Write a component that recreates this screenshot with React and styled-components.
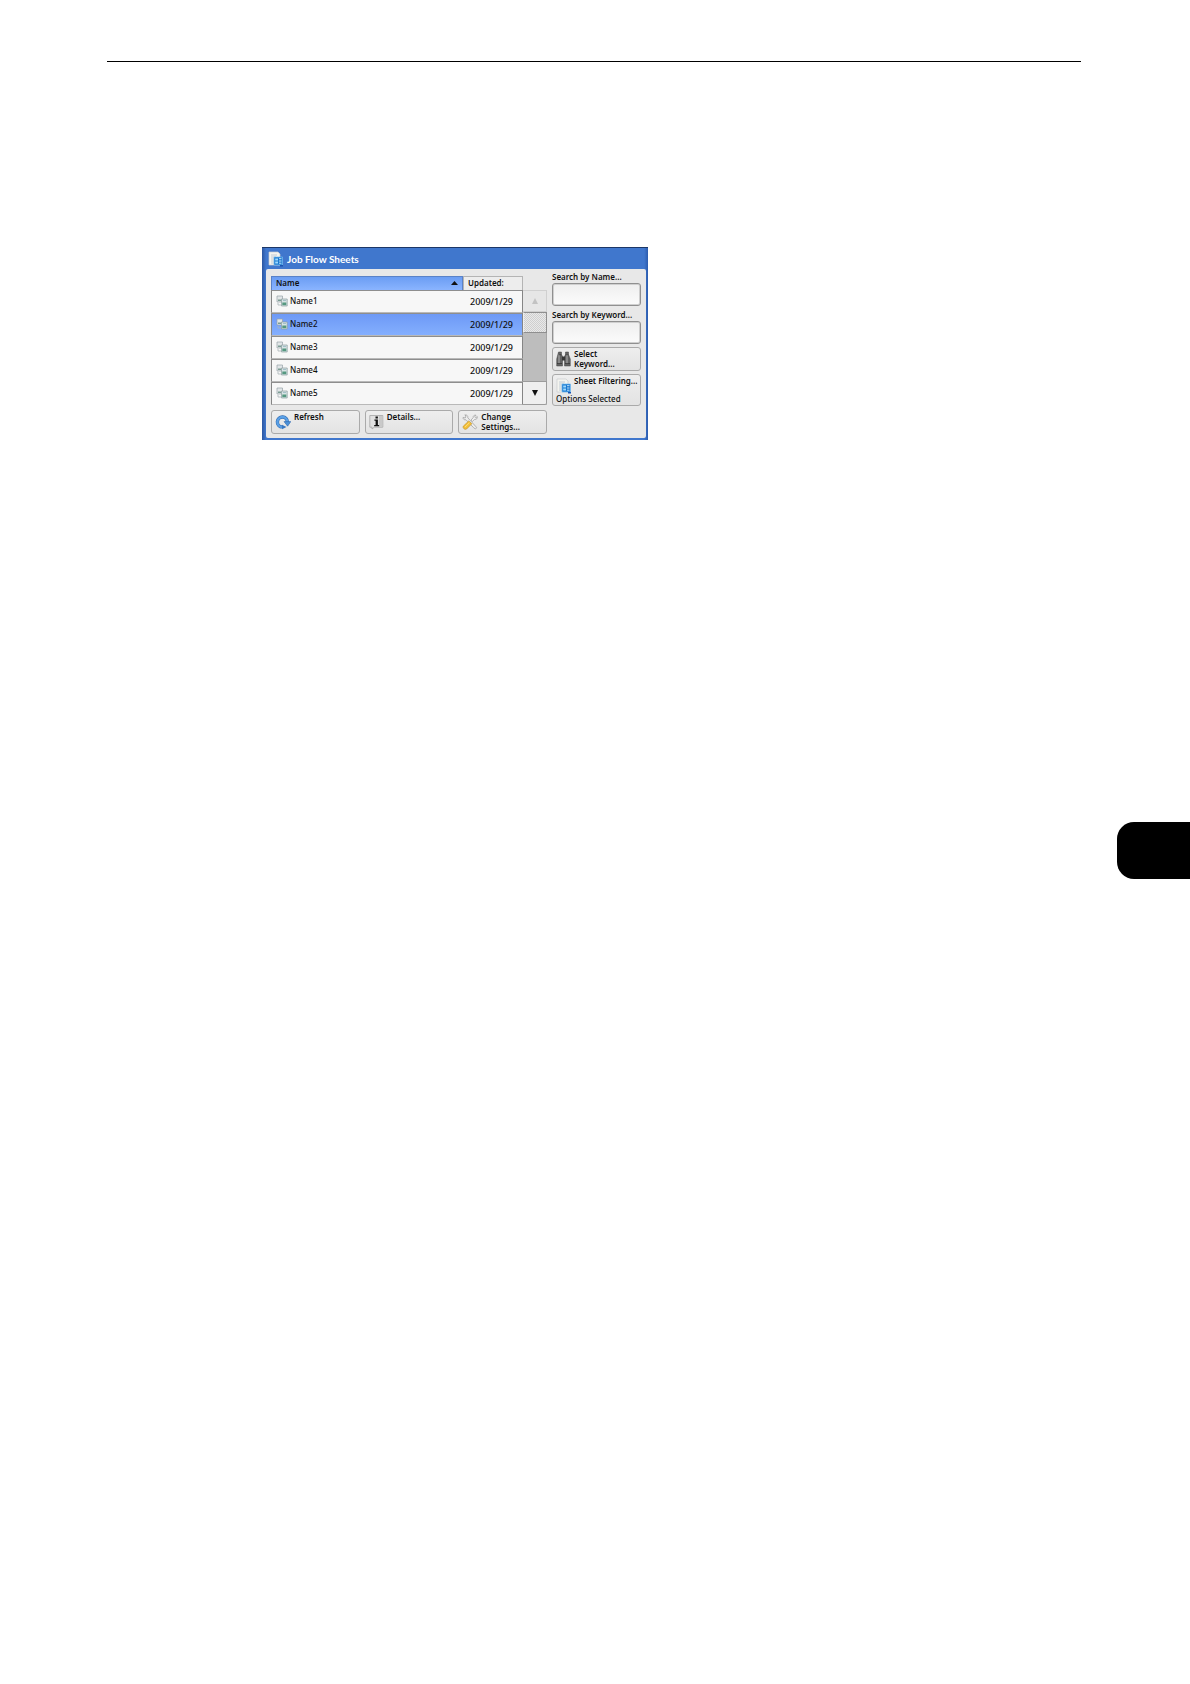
import React, { useState } from "react";
import styled, { createGlobalStyle } from "styled-components";

const GlobalStyle = createGlobalStyle`
  * {
    box-sizing: border-box;
  }

  body {
    margin: 0;
    background: #fff;
    color: #111;
    font-family: "Noto Sans", "Open Sans", sans-serif;
  }

  button, input {
    font-family: inherit;
    color: inherit;
  }

  svg {
    flex-shrink: 0;
  }
`;

const Page = styled.main`
  display: flex;
  flex-direction: column;
  min-height: 100vh;
  padding-top: 61px;
`;

const Rule = styled.hr`
  align-self: stretch;
  height: 1px;
  margin: 0 109px 0 107px;
  border: 0;
  background: #000;
`;

const SideTab = styled.aside`
  align-self: flex-end;
  width: 73px;
  height: 57px;
  margin-top: 382px;
  border-radius: 17px 0 0 17px;
  background: #000;
`;

const Screen = styled.section`
  width: 100%;
  max-width: 386px;
  margin: 185px 0 0 262px;
  padding: 0 2px 2px 4px;
  border-top: 1px solid #1c3767;
  background: linear-gradient(90deg, #2c56a0 0, #4077cd 4px, #4077cd 99%, #2c5cae 100%);
`;

const TitleBar = styled.header`
  display: flex;
  align-items: center;
  gap: 3px;
  height: 21px;
  padding-left: 2px;
`;

const Title = styled.h1`
  margin: 0;
  color: #fff;
  font-family: Lato, "Noto Sans", sans-serif;
  font-size: 10px;
  font-weight: 700;
  line-height: 20px;
`;

const Panel = styled.div`
  display: grid;
  grid-template-columns: minmax(0, 276fr) minmax(0, 89fr);
  gap: 5px;
  padding: 2px 5px 4px;
  border-radius: 2px;
  background: #e8e8e8;
`;

const ListColumn = styled.div`
  padding-top: 5px;
`;

const ListArea = styled.div`
  display: flex;
`;

const Table = styled.table`
  flex: 1;
  border-collapse: separate;
  border-spacing: 0;
  table-layout: fixed;
`;

const HeadCell = styled.th`
  width: ${({ $width }) => $width || "auto"};
  height: 14px;
  padding: 0 4px;
  border: 1px solid ${({ $sorted }) => ($sorted ? "#5a82c8" : "#b4b4b4")};
  border-bottom: 0;
  background: ${({ $sorted }) =>
    $sorted ? "linear-gradient(#6b9df3, #8ab4ff)" : "#ededed"};
  font-size: 8px;
  font-weight: 600;
  line-height: 11px;
  text-align: left;
  vertical-align: top;
`;

const SortButton = styled.button`
  display: flex;
  align-items: center;
  justify-content: space-between;
  width: 100%;
  padding: 0;
  border: 0;
  background: none;
  font-size: 8px;
  font-weight: 600;
  line-height: 11px;
`;

const Row = styled.tr`
  background: ${({ $selected }) =>
    $selected ? "linear-gradient(#6c98f5, #85b0ff)" : "#f7f7f7"};
  cursor: pointer;
`;

const Cell = styled.td`
  height: 23px;
  padding: ${({ $date }) => ($date ? "0 0 0 7px" : "0 0 2px 4px")};
  border-top: 1px solid #8e8e8e;
  border-bottom: 1px solid #b9b9b9;
  border-left: ${({ $date }) => ($date ? "0" : "1px solid #858585")};
  border-right: ${({ $date }) => ($date ? "1px solid #858585" : "0")};
  font-size: ${({ $date }) => ($date ? "9px" : "8px")};
  font-weight: 500;
  line-height: 12px;
`;

const SheetName = styled.div`
  display: flex;
  align-items: center;
  gap: 2px;
`;

const Scroller = styled.div`
  display: flex;
  flex-direction: column;
  width: 24px;
  margin-top: 14px;
  background: #bdbdbd;
`;

const ScrollButton = styled.button`
  display: flex;
  align-items: center;
  justify-content: center;
  height: ${({ $down }) => ($down ? "24px" : "22px")};
  padding: 0;
  border: 1px solid ${({ $down }) => ($down ? "#9c9c9c" : "#d0d0d0")};
  border-left: 0;
  border-radius: ${({ $down }) => ($down ? "0 0 2px 0" : "0")};
  background: ${({ $down }) => ($down ? "#efefef" : "#e6e6e6")};
`;

const Thumb = styled.div`
  height: 21px;
  border: 1px solid #8f8f8f;
  border-left-color: #eee;
  background: repeating-conic-gradient(#cfcfcf 0 25%, #e9e9e9 0 50%) 0 0 / 2px 2px;
`;

const Track = styled.div`
  flex: 1;
  border-right: 1px solid #a5a5a5;
`;

const Actions = styled.div`
  display: grid;
  grid-template-columns: repeat(3, minmax(0, 1fr));
  gap: 5px;
  margin-top: 5px;
`;

const ActionButton = styled.button`
  display: flex;
  align-items: flex-start;
  gap: 3px;
  height: 24px;
  padding: 1px 3px 2px;
  border: 1px solid #aaa;
  border-radius: 3px;
  background: linear-gradient(#eee, #e3e3e3);
  font-size: 8px;
  font-weight: 600;
  line-height: 10px;
  text-align: left;
  white-space: nowrap;

  svg {
    margin-top: 2px;
  }
`;

const SearchColumn = styled.div`
  display: flex;
  flex-direction: column;
`;

const FieldLabel = styled.label`
  height: 12px;
  font-size: 8px;
  font-weight: 600;
  line-height: 12px;
  white-space: nowrap;
`;

const SearchInput = styled.input`
  width: 100%;
  height: 23px;
  margin-bottom: 3px;
  padding: 2px 4px;
  border: 1px solid #909090;
  border-radius: 3px;
  background: linear-gradient(#efefef, #fbfbfb);
  box-shadow: inset 0 0 0 1px #cfcfcf;
  font-size: 8px;
`;

const KeywordButton = styled(ActionButton)`
  margin-bottom: 3px;
`;

const FilterButton = styled(ActionButton)`
  flex-direction: column;
  gap: 0;
  height: 32px;
`;

const FilterTop = styled.span`
  display: flex;
  align-items: flex-start;
  gap: 2px;
  height: 19px;
`;

const FilterNote = styled.span`
  font-weight: 500;
`;

const SheetIcon = ({ size = 16 }) => (
  <svg width={size} height={size} viewBox="0 0 16 16" aria-hidden="true">
    <path d="M1 1h9l2 2v11H1z" fill="#f4f4ef" stroke="#c8ccd0" strokeWidth=".7" />
    <path d="M3 4h6M3 6h5M3 8h3M3 10h3M3 12h3" stroke="#b5c2ce" strokeWidth=".8" />
    <path d="M6 6h8.5v8H6z" fill="#1a78cf" stroke="#79bef2" strokeWidth=".7" />
    <path d="M7.2 7.4h2.8v2.2H7.2zM7.2 10.6h2.8v2H7.2z" fill="#9bdaff" />
    <path d="M11 7.7h2.5M11 10h2.5M11 12.2h2.5" stroke="#d6efff" strokeWidth=".9" />
    <path d="M12 14h3v1.5h-3z" fill="#1b54b0" />
  </svg>
);

const FlowIcon = () => (
  <svg width="12" height="12" viewBox="0 0 12 12" aria-hidden="true">
    <path d="M1 1h5.5v6H1z" fill="#e2e6e8" stroke="#96a2a8" strokeWidth=".7" />
    <path d="M2 4.5h3.5V6H2z" fill="#7b9d93" />
    <path d="M2 8v2h3" fill="none" stroke="#a9b4b8" strokeWidth=".8" />
    <path d="M5.5 4h5.7v7H5.5z" fill="#d8e4e4" stroke="#899b9e" strokeWidth=".7" />
    <path d="M6.3 7.5h4v2.7h-4z" fill="#559880" />
    <path d="M7 5.5h3" stroke="#95b6c2" strokeWidth=".8" />
  </svg>
);

const RefreshIcon = () => (
  <svg width="16" height="16" viewBox="0 0 16 16" aria-hidden="true">
    <path d="M6.8 13A5 5 0 1 1 12.4 8" fill="none" stroke="#2e68ae" strokeWidth="3.4" />
    <path d="M6.8 13A5 5 0 1 1 12.4 8" fill="none" stroke="#5aa0e6" strokeWidth="2.4" />
    <path d="M9 7.6h6.8l-3.2 4.6z" fill="#4c91d9" stroke="#2e68ae" strokeWidth=".6" />
    <path d="M7 10.8 11.5 13 7 15.2z" fill="#3979c3" />
  </svg>
);

const InfoIcon = () => (
  <svg width="15" height="16" viewBox="0 0 15 16" aria-hidden="true">
    <path d="M.8 1.5h13v11.7H5.3L3 15v-1.8H.8z" fill="#e1e1e1" stroke="#a4a4a4" strokeWidth=".8" />
    <path d="M10 2h3.3v10.7H10z" fill="#c9c9c9" />
    <path d="M6.5 2.5h2.4v2H6.5zM5.4 5.5h3.5v5.4h1.2v1.3H5.2v-1.3h1.4V6.8H5.4z" fill="#111" />
  </svg>
);

const ToolsIcon = () => (
  <svg width="16" height="16" viewBox="0 0 16 16" aria-hidden="true">
    <path
      d="M1 3.5 3.2 4 4 2 2.8 1c2-.5 3.4 1 3 2.8l7.8 8.5 1 1.5-1.2 1.2-1.8-1.3L4 5.8C2.4 6.2 1 5.3 1 3.5z"
      fill="#ededed"
      stroke="#999"
      strokeWidth=".7"
    />
    <path
      d="m9 6 2.2-2.3C10.8 2 12.3.8 14 1.2l-1.4 1.6 1 1 1.7-1.2c.2 2-1 3.2-2.7 2.8L10.3 7.5z"
      fill="#f1f1f1"
      stroke="#999"
      strokeWidth=".7"
    />
    <path d="M6.8 6.9 9.8 9.8 4.6 15C2.8 16.3.2 13.8 1.4 12.1z" fill="#f3bf37" stroke="#ba8a20" strokeWidth=".6" />
    <path d="m3 13 4.5-4.3" stroke="#ffe38b" strokeWidth=".8" />
  </svg>
);

const BinocularsIcon = () => (
  <svg width="15" height="16" viewBox="0 0 15 16" aria-hidden="true">
    <path d="M2.5 1h3v2.5l1 2V15H.7V8zM9.5 1h3v2.5L14.3 8v7H8.5V5.5l1-2z" fill="#626262" stroke="#444" strokeWidth=".5" />
    <path d="M6 5.5h3v4H6z" fill="#373737" />
    <path d="M3 3v10M11 3v10" stroke="#a9a9a9" strokeWidth="1.1" />
    <path d="M1 12.5h5M9 12.5h5M2.5 3.7h3M9.5 3.7h3" stroke="#353535" strokeWidth=".8" />
  </svg>
);

const Triangle = ({ down, color = "#111", width = 6, height = 6 }) => (
  <svg width={width} height={height} viewBox="0 0 6 6" preserveAspectRatio="none" aria-hidden="true">
    <path d={down ? "M0 0h6L3 6z" : "M0 6h6L3 0z"} fill={color} />
  </svg>
);

const sheets = [
  { name: "Name1", updated: "2009/1/29" },
  { name: "Name2", updated: "2009/1/29" },
  { name: "Name3", updated: "2009/1/29" },
  { name: "Name4", updated: "2009/1/29" },
  { name: "Name5", updated: "2009/1/29" },
];

const JobFlowSheets = () => {
  const [selected, setSelected] = useState("Name2");
  const [name, setName] = useState("");
  const [keyword, setKeyword] = useState("");

  return (
    <Screen>
      <TitleBar>
        <SheetIcon size={16} />
        <Title>Job Flow Sheets</Title>
      </TitleBar>
      <Panel>
        <ListColumn>
          <ListArea>
            <Table>
              <thead>
                <tr>
                  <HeadCell $sorted aria-sort="ascending">
                    <SortButton type="button">
                      Name
                      <Triangle width={7} height={4} />
                    </SortButton>
                  </HeadCell>
                  <HeadCell $width="60px">Updated:</HeadCell>
                </tr>
              </thead>
              <tbody>
                {sheets.map((sheet) => (
                  <Row
                    key={sheet.name}
                    $selected={sheet.name === selected}
                    onClick={() => setSelected(sheet.name)}
                  >
                    <Cell>
                      <SheetName>
                        <FlowIcon />
                        {sheet.name}
                      </SheetName>
                    </Cell>
                    <Cell $date>{sheet.updated}</Cell>
                  </Row>
                ))}
              </tbody>
            </Table>
            <Scroller>
              <ScrollButton type="button" aria-label="Scroll up" disabled>
                <Triangle color="#c2c2c2" />
              </ScrollButton>
              <Thumb />
              <Track />
              <ScrollButton type="button" aria-label="Scroll down" $down>
                <Triangle down />
              </ScrollButton>
            </Scroller>
          </ListArea>
          <Actions>
            <ActionButton type="button">
              <RefreshIcon />
              Refresh
            </ActionButton>
            <ActionButton type="button">
              <InfoIcon />
              Details...
            </ActionButton>
            <ActionButton type="button">
              <ToolsIcon />
              <span>
                Change
                <br />
                Settings...
              </span>
            </ActionButton>
          </Actions>
        </ListColumn>
        <SearchColumn>
          <FieldLabel htmlFor="search-name">Search by Name...</FieldLabel>
          <SearchInput
            id="search-name"
            type="text"
            value={name}
            onChange={(e) => setName(e.target.value)}
          />
          <FieldLabel htmlFor="search-keyword">Search by Keyword...</FieldLabel>
          <SearchInput
            id="search-keyword"
            type="text"
            value={keyword}
            onChange={(e) => setKeyword(e.target.value)}
          />
          <KeywordButton type="button">
            <BinocularsIcon />
            <span>
              Select
              <br />
              Keyword...
            </span>
          </KeywordButton>
          <FilterButton type="button">
            <FilterTop>
              <SheetIcon size={16} />
              Sheet Filtering...
            </FilterTop>
            <FilterNote>Options Selected</FilterNote>
          </FilterButton>
        </SearchColumn>
      </Panel>
    </Screen>
  );
};

const App = () => (
  <>
    <GlobalStyle />
    <Page>
      <Rule />
      <JobFlowSheets />
      <SideTab />
    </Page>
  </>
);

export default App;
